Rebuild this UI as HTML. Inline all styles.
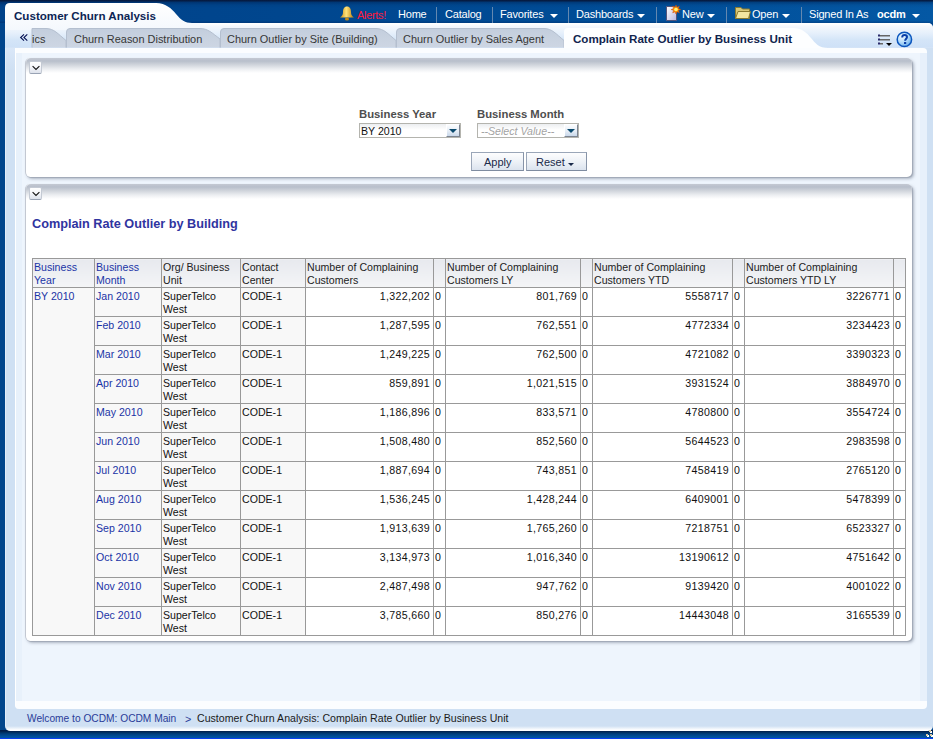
<!DOCTYPE html>
<html><head><meta charset="utf-8">
<style>
*{margin:0;padding:0;box-sizing:border-box}
html,body{width:933px;height:739px;overflow:hidden}
body{position:relative;font-family:"Liberation Sans",sans-serif;font-size:10.6px;color:#222;
background:#00458c}
.abs{position:absolute}
.t{position:absolute;white-space:nowrap;line-height:1}
#topbar{left:0;top:0;width:933px;height:23px;background:linear-gradient(rgba(6,24,60,.92) 0,rgba(6,24,60,.92) 1px,rgba(0,20,60,.35) 2px,rgba(0,20,60,.08) 5px,rgba(0,0,0,0) 8px,rgba(0,0,0,0) 21px,rgba(0,20,70,.2) 22px,rgba(0,20,70,.2) 23px),linear-gradient(90deg,#00428a 0,#00468e 30%,#004c96 62%,#0458a4 100%)}
#botbar{left:0;top:730px;width:933px;height:9px;background:linear-gradient(#001c48 0,#001c48 1px,#002a5a 2px,#003f7e 4px,#0052a0 7px,#0052a0 8px,#0a3ff0 8px,#0a3ff0 9px)}
#outer{left:5px;top:23px;width:928px;height:708px;border-radius:0 5px 5px 5px;background:linear-gradient(#cfe0f3 0,#cfe0f3 703px,#fff 707px);border-left:1px solid #e2edf9}
#tabbg{left:5px;top:23px;width:928px;height:25px;border-radius:0 5px 0 0;background:linear-gradient(#fff 0,#fff 1px,#f5f8fd 3px,#e6f0fb 10px,#d4e5f8 17px,#cfe1f7 24px,#d8e6f7 25px)}
#leftcol{left:6px;top:48px;width:9px;height:655px;background:linear-gradient(#dae7f8 0,#cfe0f3 22px)}
#content{left:15px;top:48px;width:912px;height:661px;border-radius:0 4px 4px 4px;background:#fbfdff;border-left:1px solid #fff}
#contentin{left:16px;top:53px;width:911px;height:648px;background:linear-gradient(90deg,#e8f1fb 0,#e8f1fb 6px,#eef5fd 6px,#eef5fd 904px,#e7f0fb 904px)}
.menu{color:#fff;font-size:11px;letter-spacing:-0.2px;top:9px}
.sep{position:absolute;top:7px;width:1px;height:16px;background:#6488b0}
.arr{position:absolute;width:0;height:0;border-left:4px solid transparent;border-right:4px solid transparent;border-top:4px solid #fff}
.tabtxt{color:#363636;font-size:10.95px;top:34px}
.panel{position:absolute;left:25px;width:887px;background:#fff;border-radius:5px;border-left:1px solid #c3c8d2;
box-shadow:1px 1px 0 rgba(150,158,172,.6),2px 2px 3px rgba(110,120,140,.5)}
.panel .grad{position:absolute;left:0;top:0;right:0;height:16px;border-radius:5px 5px 0 0;background:linear-gradient(#c4c9d3 0,#b8bfcb 3px,#d2d6dd 7px,#eceef1 11px,#fff 15px)}
.cbtn{position:absolute;left:3px;top:3px;width:13px;height:13px;border-radius:2px;border:1px solid #c4cad4;border-bottom-color:#99a3b4;background:linear-gradient(#fff,#f6f7fa 45%,#dde2eb)}
.lbl{color:#4e4e4e;font-weight:bold;font-size:11.3px}
.sel{position:absolute;height:15px;border:1px solid #b4b4ae;background:linear-gradient(#eceef0,#fff 45%)}
.selbtn{position:absolute;right:0;top:0;width:14px;height:13px;border-left:1px solid #fff;border-top:1px solid #fff;border-right:1px solid #7c8491;border-bottom:1px solid #7c8491;background:linear-gradient(#fbfcfe,#e6edf6 55%,#c9d8ea)}
.selbtn:after{content:"";position:absolute;left:1.5px;top:4px;border-left:4px solid transparent;border-right:4px solid transparent;border-top:4px solid #0a4a6e}
.btn{position:absolute;height:19px;border:1px solid #9aa6b8;border-bottom-color:#7f8ca0;border-right-color:#8794a8;background:linear-gradient(#fdfdfe,#eef2f7 50%,#dbe3ee);color:#1a2a4a;font-size:11px}
table{position:absolute;border-collapse:collapse;left:32px;top:258px;table-layout:fixed}
td,th{border:1px solid #999;vertical-align:top;font-weight:normal;text-align:left;font-size:10.6px;line-height:13px;padding:2px 0 0 1px;overflow:hidden;white-space:nowrap}
th{background:linear-gradient(#e7e9ee,#f4f5f7);color:#222;height:29px}
th.b{color:#1a34a6}
td{height:29px;background:#fff;color:#111}
td.g{background:#f8f8f8;color:#1a34a6}
td.k{background:#f8f8f8}
td.r{text-align:right;padding-right:3px;letter-spacing:0.35px}
</style></head><body>
<div id="topbar" class="abs"></div>
<div id="botbar" class="abs"></div>
<div id="outer" class="abs"></div>
<div id="tabbg" class="abs"></div>
<!-- title tab -->
<svg class="abs" style="left:0;top:0" width="200" height="30">
<defs><linearGradient id="tg" x1="0" y1="0" x2="0" y2="1"><stop offset="0" stop-color="#ffffff"/><stop offset="1" stop-color="#f4f8fd"/></linearGradient></defs>
<path d="M5,30 V8 Q5,3 10,3 H156 C166,3 172,9 176,14 C181,20 185,23 192,23 H200 V30 Z" fill="url(#tg)"/>
</svg>
<div class="t" style="left:14px;top:10px;font-weight:bold;font-size:11.6px;color:#0c2454">Customer Churn Analysis</div>

<!-- menu -->
<svg class="abs" style="left:339px;top:5px" width="16" height="16" viewBox="0 0 16 16">
<defs><linearGradient id="bell" x1="0" y1="0" x2="1" y2="0"><stop offset="0" stop-color="#c88a10"/><stop offset=".45" stop-color="#ffe27a"/><stop offset="1" stop-color="#b87a08"/></linearGradient></defs>
<path d="M8,1.5 C11,1.5 12,4 12,7 C12,10 13,11 15,12.5 H1 C3,11 4,10 4,7 C4,4 5,1.5 8,1.5 Z" fill="url(#bell)"/>
<ellipse cx="8" cy="14" rx="2" ry="1.5" fill="#c88a10"/>
</svg>
<div class="t menu" style="left:357px;top:10px;color:#ff1a3c;letter-spacing:-0.3px">Alerts!</div>
<div class="t menu" style="left:398px">Home</div>
<div class="sep" style="left:436px"></div>
<div class="t menu" style="left:445px">Catalog</div>
<div class="sep" style="left:492px"></div>
<div class="t menu" style="left:500px">Favorites</div>
<div class="arr" style="left:550px;top:14px"></div>
<div class="sep" style="left:568px"></div>
<div class="t menu" style="left:576px">Dashboards</div>
<div class="arr" style="left:637px;top:14px"></div>
<div class="sep" style="left:656px"></div>
<svg class="abs" style="left:664px;top:5px" width="18" height="17" viewBox="0 0 18 17">
<defs><linearGradient id="pg" x1="0" y1="0" x2="1" y2="1"><stop offset="0" stop-color="#ffffff"/><stop offset="1" stop-color="#b8b8e0"/></linearGradient></defs>
<path d="M2.5,1.5 H10 L12.5,4 V15.5 H2.5 Z" fill="url(#pg)" stroke="#55557a" stroke-width="1"/>
<path d="M12,0 L12.9,2.3 L15.3,1.2 L14.3,3.6 L16.8,4.5 L14.3,5.4 L15.3,7.8 L12.9,6.7 L12,9 L11.1,6.7 L8.7,7.8 L9.7,5.4 L7.2,4.5 L9.7,3.6 L8.7,1.2 L11.1,2.3 Z" fill="#ff9a00" stroke="#d04000" stroke-width=".5"/>
<circle cx="12" cy="4.5" r="1.8" fill="#fff27a"/>
</svg>
<div class="t menu" style="left:682px">New</div>
<div class="arr" style="left:707px;top:14px"></div>
<div class="sep" style="left:726px"></div>
<svg class="abs" style="left:735px;top:6px" width="16" height="14" viewBox="0 0 16 14">
<path d="M0.5,1.5 H6 L7.5,3 H14.5 V12.5 H0.5 Z" fill="#d8c878" stroke="#8a7a30"/>
<path d="M0.5,12.5 L3,5.5 H15.5 L13.5,12.5 Z" fill="#f2e6a0" stroke="#8a7a30"/>
</svg>
<div class="t menu" style="left:752px">Open</div>
<div class="arr" style="left:782px;top:14px"></div>
<div class="sep" style="left:801px"></div>
<div class="t menu" style="left:809px">Signed In As</div>
<div class="t menu" style="left:877px;font-weight:bold">ocdm</div>
<div class="arr" style="left:912px;top:14px"></div>

<!-- tabs -->
<svg class="abs" style="left:0;top:20px" width="933" height="30">
<defs><linearGradient id="tabg" x1="0" y1="0" x2="0" y2="1"><stop offset="0" stop-color="#c3cedd"/><stop offset="1" stop-color="#cdd6e3"/></linearGradient></defs>
<g fill="url(#tabg)" stroke="#b4bfcf" stroke-width="1">
<path d="M32,27.5 V8.5 H46 C54,8.5 58,14 66,20.5 V27.5"/>
<path d="M66.5,27.5 V12 Q66.5,8.5 70,8.5 H200 C208,8.5 212,13 220,19 V27.5"/>
<path d="M220.5,27.5 V12 Q220.5,8.5 224,8.5 H376 C384,8.5 388,14 396,20.5 V27.5"/>
<path d="M396.5,27.5 V12 Q396.5,8.5 400,8.5 H544 C552,8.5 556,14 564,20.5 V27.5"/>
</g>
<path d="M564,28 V12 Q564,8 568,8 H793 C802,8 807,13 811,18 C815,23 819,28 828,28 Z" fill="#fdfeff"/>
</svg>
<svg class="abs" style="left:19px;top:33px" width="10" height="9" viewBox="0 0 10 9"><path d="M5,1.3 L1.6,4.5 L5,7.7 M8.3,1.3 L4.9,4.5 L8.3,7.7" fill="none" stroke="#000d50" stroke-width="1.05"/></svg>
<div class="t tabtxt" style="left:32px">ics</div>
<div class="t tabtxt" style="left:74px">Churn Reason Distribution</div>
<div class="t tabtxt" style="left:227px">Churn Outlier by Site (Building)</div>
<div class="t tabtxt" style="left:403px">Churn Outlier by Sales Agent</div>
<div class="t" style="left:573px;top:33px;font-weight:bold;font-size:11.6px;color:#10244e">Complain Rate Outlier by Business Unit</div>
<svg class="abs" style="left:876px;top:32px" width="18" height="16" viewBox="0 0 18 16">
<g fill="#2a2a6a"><rect x="2" y="2.5" width="2" height="2"/><rect x="2" y="6.5" width="2" height="2"/><rect x="2" y="10.5" width="2" height="2"/></g>
<g fill="#666"><rect x="4" y="3" width="10" height="1.5"/><rect x="4" y="7" width="10" height="1.5"/><rect x="4" y="11" width="3" height="1.5"/></g>
<path d="M10,11 H16 L13,14 Z" fill="#000"/>
</svg>
<svg class="abs" style="left:896px;top:31px" width="17" height="17" viewBox="0 0 17 17">
<defs><radialGradient id="hg" cx=".35" cy=".3" r=".8"><stop offset="0" stop-color="#f4fbff"/><stop offset=".5" stop-color="#b4dcfa"/><stop offset="1" stop-color="#5fa8ea"/></radialGradient></defs>
<circle cx="8.4" cy="8.4" r="7.2" fill="url(#hg)" stroke="#0b55bd" stroke-width="1.5"/>
<path d="M6.2,6.4 C6.2,4.8 7.2,4 8.6,4 C10.1,4 11,4.9 11,6.1 C11,7.6 9.1,7.9 9.1,9.8" fill="none" stroke="#0a3fa8" stroke-width="2"/>
<rect x="8" y="11" width="2.2" height="2" fill="#0a3fa8"/>
</svg>

<div id="leftcol" class="abs"></div>
<div id="content" class="abs"></div>
<div id="contentin" class="abs"></div>

<!-- panel 1 -->
<div class="panel" style="top:58px;height:119px"><div class="grad"></div><div class="cbtn"></div>
<svg class="abs" style="left:6px;top:7px" width="8" height="6" viewBox="0 0 8 6"><path d="M0.6,1.2 L4,4.4 L7.4,1.2" fill="none" stroke="#111" stroke-width="1.1"/></svg>
</div>
<div class="t lbl" style="left:359px;top:109px">Business Year</div>
<div class="t lbl" style="left:477px;top:109px">Business Month</div>
<div class="sel" style="left:359px;top:123px;width:102px"><div class="t" style="left:1px;top:2px;color:#111;font-size:10.6px">BY 2010</div><div class="selbtn"></div></div>
<div class="sel" style="left:477px;top:123px;width:102px"><div class="t" style="left:3px;top:2px;color:#a4a4a4;font-style:italic;font-size:10.6px">--Select Value--</div><div class="selbtn"></div></div>
<div class="btn" style="left:471px;top:152px;width:53px"><div class="t" style="left:12px;top:4px">Apply</div></div>
<div class="btn" style="left:526px;top:152px;width:61px"><div class="t" style="left:9px;top:4px">Reset</div><div class="arr" style="left:41px;top:10px;border-top-color:#1a2a4a;border-width:3px 3.5px 0 3.5px"></div></div>

<!-- panel 2 -->
<div class="panel" style="top:184px;height:457px"><div class="grad"></div><div class="cbtn"></div>
<svg class="abs" style="left:6px;top:7px" width="8" height="6" viewBox="0 0 8 6"><path d="M0.6,1.2 L4,4.4 L7.4,1.2" fill="none" stroke="#111" stroke-width="1.1"/></svg>
</div>
<div class="t" style="left:32px;top:218px;font-weight:bold;font-size:12.7px;color:#3034a0">Complain Rate Outlier by Building</div>

<div id="tbl"><table><colgroup><col style="width:62px"><col style="width:67px"><col style="width:79px"><col style="width:65px"><col style="width:128px"><col style="width:12px"><col style="width:135px"><col style="width:12px"><col style="width:140px"><col style="width:12px"><col style="width:149px"><col style="width:12px"></colgroup>
<tr><th class="b">Business<br>Year</th><th class="b">Business<br>Month</th><th>Org/ Business<br>Unit</th><th>Contact<br>Center</th><th>Number of Complaining<br>Customers</th><th></th><th>Number of Complaining<br>Customers LY</th><th></th><th>Number of Complaining<br>Customers YTD</th><th></th><th>Number of Complaining<br>Customers YTD LY</th><th></th></tr>
<tr><td class="g" rowspan="12">BY 2010</td><td class="g">Jan 2010</td><td class="k">SuperTelco<br>West</td><td class="k">CODE-1</td><td class="r">1,322,202</td><td>0</td><td class="r">801,769</td><td>0</td><td class="r">5558717</td><td>0</td><td class="r">3226771</td><td>0</td></tr>
<tr><td class="g">Feb 2010</td><td class="k">SuperTelco<br>West</td><td class="k">CODE-1</td><td class="r">1,287,595</td><td>0</td><td class="r">762,551</td><td>0</td><td class="r">4772334</td><td>0</td><td class="r">3234423</td><td>0</td></tr>
<tr><td class="g">Mar 2010</td><td class="k">SuperTelco<br>West</td><td class="k">CODE-1</td><td class="r">1,249,225</td><td>0</td><td class="r">762,500</td><td>0</td><td class="r">4721082</td><td>0</td><td class="r">3390323</td><td>0</td></tr>
<tr><td class="g">Apr 2010</td><td class="k">SuperTelco<br>West</td><td class="k">CODE-1</td><td class="r">859,891</td><td>0</td><td class="r">1,021,515</td><td>0</td><td class="r">3931524</td><td>0</td><td class="r">3884970</td><td>0</td></tr>
<tr><td class="g">May 2010</td><td class="k">SuperTelco<br>West</td><td class="k">CODE-1</td><td class="r">1,186,896</td><td>0</td><td class="r">833,571</td><td>0</td><td class="r">4780800</td><td>0</td><td class="r">3554724</td><td>0</td></tr>
<tr><td class="g">Jun 2010</td><td class="k">SuperTelco<br>West</td><td class="k">CODE-1</td><td class="r">1,508,480</td><td>0</td><td class="r">852,560</td><td>0</td><td class="r">5644523</td><td>0</td><td class="r">2983598</td><td>0</td></tr>
<tr><td class="g">Jul 2010</td><td class="k">SuperTelco<br>West</td><td class="k">CODE-1</td><td class="r">1,887,694</td><td>0</td><td class="r">743,851</td><td>0</td><td class="r">7458419</td><td>0</td><td class="r">2765120</td><td>0</td></tr>
<tr><td class="g">Aug 2010</td><td class="k">SuperTelco<br>West</td><td class="k">CODE-1</td><td class="r">1,536,245</td><td>0</td><td class="r">1,428,244</td><td>0</td><td class="r">6409001</td><td>0</td><td class="r">5478399</td><td>0</td></tr>
<tr><td class="g">Sep 2010</td><td class="k">SuperTelco<br>West</td><td class="k">CODE-1</td><td class="r">1,913,639</td><td>0</td><td class="r">1,765,260</td><td>0</td><td class="r">7218751</td><td>0</td><td class="r">6523327</td><td>0</td></tr>
<tr><td class="g">Oct 2010</td><td class="k">SuperTelco<br>West</td><td class="k">CODE-1</td><td class="r">3,134,973</td><td>0</td><td class="r">1,016,340</td><td>0</td><td class="r">13190612</td><td>0</td><td class="r">4751642</td><td>0</td></tr>
<tr><td class="g">Nov 2010</td><td class="k">SuperTelco<br>West</td><td class="k">CODE-1</td><td class="r">2,487,498</td><td>0</td><td class="r">947,762</td><td>0</td><td class="r">9139420</td><td>0</td><td class="r">4001022</td><td>0</td></tr>
<tr><td class="g">Dec 2010</td><td class="k">SuperTelco<br>West</td><td class="k">CODE-1</td><td class="r">3,785,660</td><td>0</td><td class="r">850,276</td><td>0</td><td class="r">14443048</td><td>0</td><td class="r">3165539</td><td>0</td></tr>
</table></div>

<!-- breadcrumb -->
<div class="t" style="left:27px;top:714px;color:#2a3c98;font-size:10.2px">Welcome to OCDM: OCDM Main</div>
<div class="t" style="left:185px;top:714px;color:#2a3c98;font-size:10.8px">&gt;</div>
<div class="t" style="left:197px;top:713px;color:#1a1a1a;font-size:10.6px">Customer Churn Analysis: Complain Rate Outlier by Business Unit</div>
<div class="abs" style="left:930px;top:731px;width:2px;height:2px;background:#fff"></div><div class="abs" style="left:929px;top:730px;width:2px;height:2px;background:#d6c6a0"></div>
<div class="abs" style="left:927px;top:735px;width:2px;height:2px;background:#fff"></div><div class="abs" style="left:926px;top:734px;width:2px;height:2px;background:#d6c6a0"></div>
<div class="abs" style="left:931px;top:735px;width:2px;height:2px;background:#fff"></div><div class="abs" style="left:930px;top:734px;width:2px;height:2px;background:#d6c6a0"></div>
</body></html>
